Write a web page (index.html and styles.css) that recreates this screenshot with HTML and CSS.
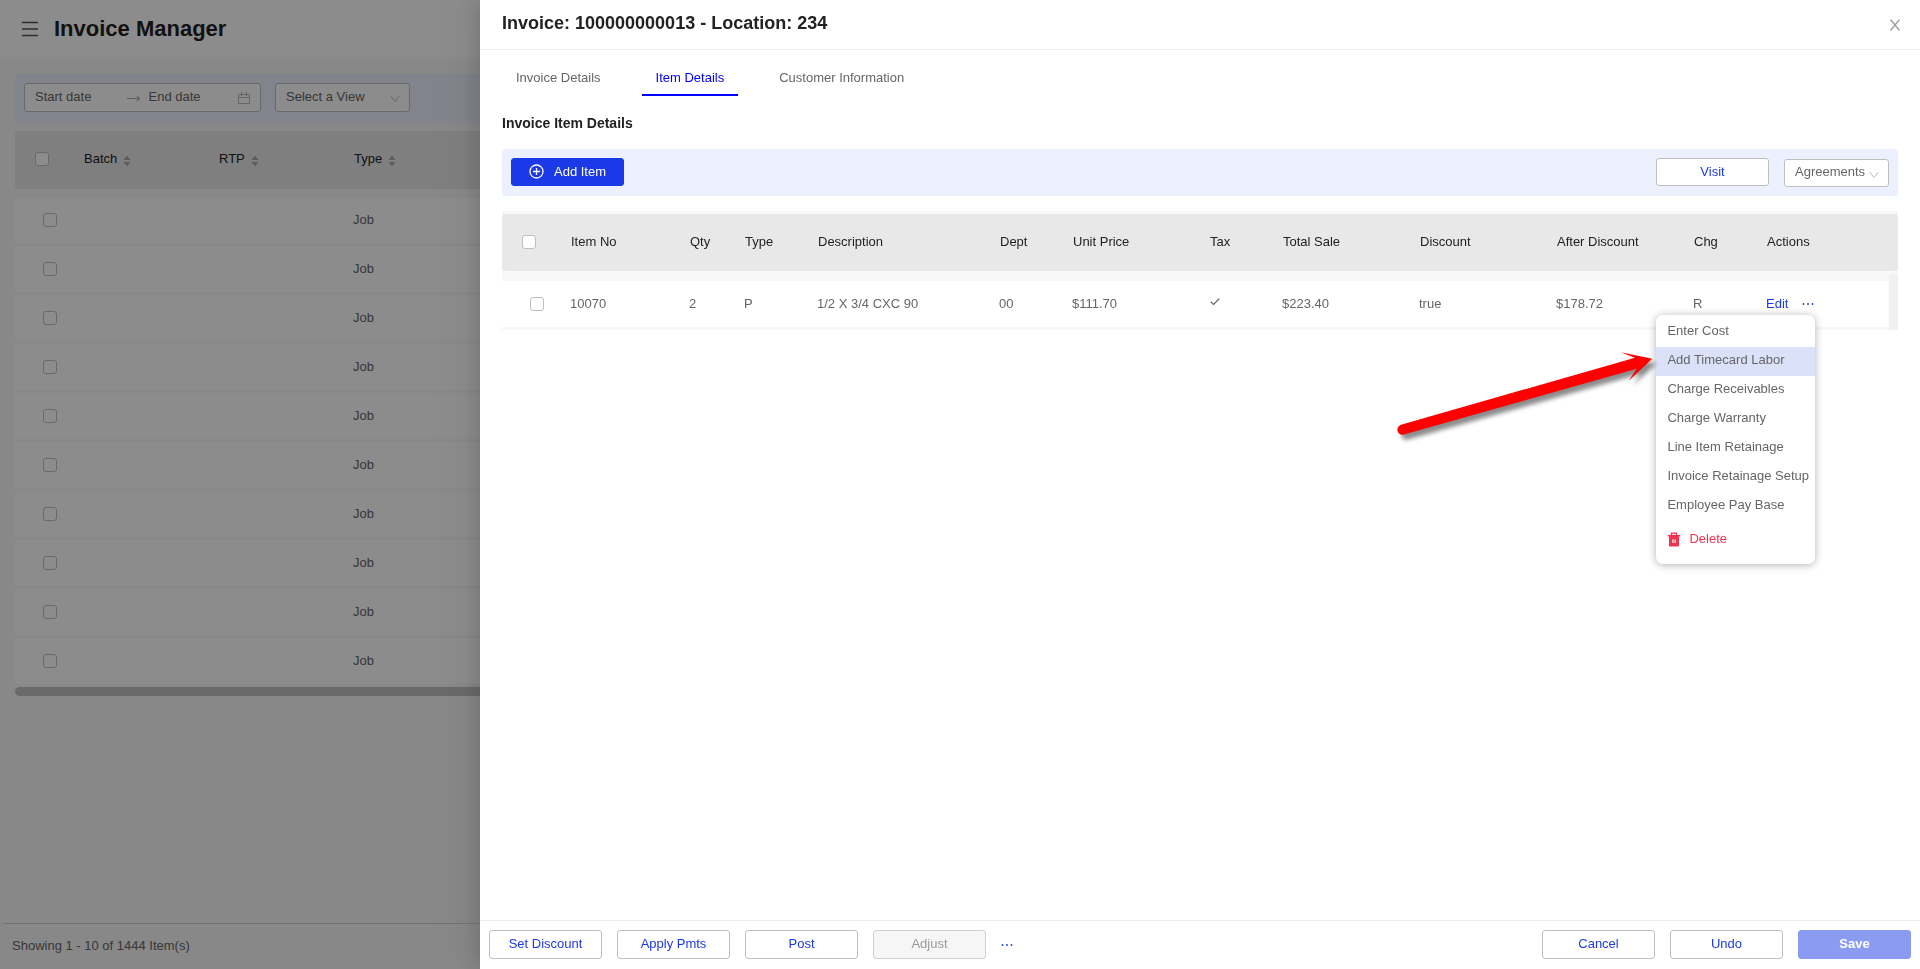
FILE: index.html
```html
<!DOCTYPE html>
<html lang="en">
<head>
<meta charset="utf-8">
<title>Invoice Manager</title>
<meta name="viewport" content="width=device-width, initial-scale=1">
<link rel="stylesheet" href="styles.css">
</head>
<body>
<div class="app">
  <header class="topbar">
    <button class="menu-toggle" type="button" aria-label="Menu">
      <svg width="18" height="16" viewBox="0 0 18 16" fill="none" stroke="currentColor" stroke-width="1.7"><path d="M1 1.500h16M1 8h16M1 14.500h16"/></svg>
    </button>
    <h1 class="page-title">Invoice Manager</h1>
  </header>
  <main class="content">
    <div class="filters">
      <div class="date-range">
        <input class="date-input" type="text" placeholder="Start date" aria-label="Start date">
        <svg class="range-arrow" width="14" height="8" viewBox="0 0 14 8" fill="none" stroke="currentColor"><path d="M0 4.500h13M9.500 2l3.500 2.500L9.500 7"/></svg>
        <input class="date-input" type="text" placeholder="End date" aria-label="End date">
        <svg class="calendar" width="12" height="12" viewBox="0 0 12 12" fill="none" stroke="currentColor"><path d="M.5 2.500h11v9H.5zM.5 5.500h11M3.500 0v4M8.500 0v4"/></svg>
      </div>
      <div class="select-box view-select">
        <select class="select" aria-label="View"><option>Select a View</option></select>
        <svg class="chevron" width="10" height="8" viewBox="0 0 10 8" fill="none" stroke="currentColor"><path d="M.7 1l4.300 5.500L9.300 1"/></svg>
      </div>
    </div>
    <table class="list">
      <colgroup><col class="list-check"><col class="list-col"><col class="list-col"><col></colgroup>
      <thead>
        <tr>
          <th><input class="check" type="checkbox" aria-label="Select all invoices"></th>
          <th><span class="sortable">Batch <svg class="sort" width="8" height="12" viewBox="0 0 8 12"><path d="M4 .5L7.500 5h-7zM4 11.500L.5 7h7z" fill="currentColor"/></svg></span></th>
          <th><span class="sortable">RTP <svg class="sort" width="8" height="12" viewBox="0 0 8 12"><path d="M4 .5L7.500 5h-7zM4 11.500L.5 7h7z" fill="currentColor"/></svg></span></th>
          <th><span class="sortable">Type <svg class="sort" width="8" height="12" viewBox="0 0 8 12"><path d="M4 .5L7.500 5h-7zM4 11.500L.5 7h7z" fill="currentColor"/></svg></span></th>
        </tr>
      </thead>
      <tbody>
        <tr><td><input class="check" type="checkbox" aria-label="Select row 1"></td><td></td><td></td><td>Job</td></tr>
        <tr><td><input class="check" type="checkbox" aria-label="Select row 2"></td><td></td><td></td><td>Job</td></tr>
        <tr><td><input class="check" type="checkbox" aria-label="Select row 3"></td><td></td><td></td><td>Job</td></tr>
        <tr><td><input class="check" type="checkbox" aria-label="Select row 4"></td><td></td><td></td><td>Job</td></tr>
        <tr><td><input class="check" type="checkbox" aria-label="Select row 5"></td><td></td><td></td><td>Job</td></tr>
        <tr><td><input class="check" type="checkbox" aria-label="Select row 6"></td><td></td><td></td><td>Job</td></tr>
        <tr><td><input class="check" type="checkbox" aria-label="Select row 7"></td><td></td><td></td><td>Job</td></tr>
        <tr><td><input class="check" type="checkbox" aria-label="Select row 8"></td><td></td><td></td><td>Job</td></tr>
        <tr><td><input class="check" type="checkbox" aria-label="Select row 9"></td><td></td><td></td><td>Job</td></tr>
        <tr><td><input class="check" type="checkbox" aria-label="Select row 10"></td><td></td><td></td><td>Job</td></tr>
      </tbody>
    </table>
    <div class="list-scroll"></div>
  </main>
  <footer class="status">Showing 1 - 10 of 1444 Item(s)</footer>
</div>
<div class="mask"></div>
<section class="drawer" role="dialog" aria-label="Invoice">
  <header class="drawer-head">
    <h2 class="drawer-title">Invoice: 100000000013 - Location: 234</h2>
    <button class="close" type="button" aria-label="Close">
      <svg width="10" height="12" viewBox="0 0 10 12" fill="none" stroke="currentColor" stroke-width="1.200"><path d="M.5.5l9 11M9.500.5l-9 11"/></svg>
    </button>
  </header>
  <div class="drawer-body">
    <nav class="tabs">
      <button class="tab" type="button">Invoice Details</button>
      <button class="tab tab-active" type="button">Item Details</button>
      <button class="tab" type="button">Customer Information</button>
    </nav>
    <h3 class="section-title">Invoice Item Details</h3>
    <div class="toolbar">
      <button class="btn btn-primary" type="button">
        <svg width="15" height="15" viewBox="0 0 15 15" fill="none" stroke="currentColor" stroke-width="1.300"><circle cx="7.500" cy="7.500" r="6.500"/><path d="M7.500 4v7M4 7.500h7"/></svg>
        Add Item
      </button>
      <div class="toolbar-right">
        <button class="btn" type="button">Visit</button>
        <div class="select-box agreements">
          <select class="select" aria-label="Agreements"><option>Agreements</option></select>
          <svg class="chevron" width="10" height="8" viewBox="0 0 10 8" fill="none" stroke="currentColor"><path d="M.7 1l4.300 5.500L9.300 1"/></svg>
        </div>
      </div>
    </div>
    <div class="items-wrap">
      <table class="items">
        <colgroup>
          <col class="c-check"><col class="c-item"><col class="c-qty"><col class="c-small"><col><col class="c-small"><col class="c-money"><col class="c-small"><col class="c-money"><col class="c-money"><col class="c-money"><col class="c-small"><col class="c-actions"><col class="c-gutter">
        </colgroup>
        <thead>
          <tr>
            <th><input class="check" type="checkbox" aria-label="Select all items"></th>
            <th>Item No</th><th>Qty</th><th>Type</th><th>Description</th><th>Dept</th><th>Unit Price</th><th>Tax</th><th>Total Sale</th><th>Discount</th><th>After Discount</th><th>Chg</th><th>Actions</th><th class="head-end"></th>
          </tr>
        </thead>
        <tbody>
          <tr>
            <td><input class="check" type="checkbox" aria-label="Select item 10070"></td>
            <td>10070</td><td>2</td><td>P</td><td>1/2 X 3/4 CXC 90</td><td>00</td><td>$111.70</td>
            <td><svg class="tick" width="10" height="8" viewBox="0 0 10 8" fill="none" stroke="currentColor" stroke-width="1.200"><path d="M.7 3.800l2.800 2.700L9.300.8"/></svg></td>
            <td>$223.40</td><td>true</td><td>$178.72</td><td>R</td>
            <td>
              <div class="actions">
                <a class="edit" href="#">Edit</a>
                <button class="more" type="button" aria-label="More actions"><svg width="12" height="4" viewBox="0 0 12 4" fill="currentColor"><circle cx="1.500" cy="2" r=".9"/><circle cx="6" cy="2" r=".9"/><circle cx="10.500" cy="2" r=".9"/></svg></button>
                <div class="menu">
                  <button class="menu-item" type="button">Enter Cost</button>
                  <button class="menu-item menu-hover" type="button">Add Timecard Labor</button>
                  <button class="menu-item" type="button">Charge Receivables</button>
                  <button class="menu-item" type="button">Charge Warranty</button>
                  <button class="menu-item" type="button">Line Item Retainage</button>
                  <button class="menu-item" type="button">Invoice Retainage Setup</button>
                  <button class="menu-item" type="button">Employee Pay Base</button>
                  <button class="menu-item menu-delete" type="button">
                    <svg width="14" height="15" viewBox="0 0 14 15" fill="none" stroke="currentColor"><path d="M4.500 3V1.200h5V3" stroke-width="1.300"/><path d="M.8 3.700h12.400" stroke-width="1.600"/><path d="M2.500 4.500h9v9.500h-9z" fill="currentColor"/><path d="M5.900 7.500v3.600M8.100 7.500v3.600" stroke="#fff" stroke-width="1.200"/></svg>
                    Delete
                  </button>
                  <svg class="pointer" width="272" height="102" viewBox="0 0 272 102"><path d="M9 79.800L243 12.700l-14.300-5.400 31.600 6.400-23.600 22 8-12L12 89.600A5.100 5.100 0 0 1 9 79.800z" fill="#f00"/></svg>
                </div>
              </div>
            </td>
            <td class="gutter"></td>
          </tr>
        </tbody>
      </table>
    </div>
  </div>
  <footer class="drawer-foot">
    <button class="btn" type="button">Set Discount</button>
    <button class="btn" type="button">Apply Pmts</button>
    <button class="btn" type="button">Post</button>
    <button class="btn" type="button" disabled>Adjust</button>
    <button class="more" type="button" aria-label="More"><svg width="12" height="4" viewBox="0 0 12 4" fill="currentColor"><circle cx="1.500" cy="2" r=".9"/><circle cx="6" cy="2" r=".9"/><circle cx="10.500" cy="2" r=".9"/></svg></button>
    <div class="foot-right">
      <button class="btn" type="button">Cancel</button>
      <button class="btn" type="button">Undo</button>
      <button class="btn btn-save" type="button">Save</button>
    </div>
  </footer>
</section>
</body>
</html>
```
FILE: styles.css
```css
* { box-sizing: border-box; }
html, body { height: 100%; }
body {
  margin: 0;
  overflow: hidden;
  font: 13px/20px "Liberation Sans", Arial, sans-serif;
  color: #666;
  background: #f7f7f7;
}
button, input, select { font: inherit; color: inherit; }
button { margin: 0; padding: 0; border: 0; background: none; cursor: pointer; }
svg { display: block; flex: none; }
h1, h2, h3 { margin: 0; color: #222; font-weight: 700; }
table { border-collapse: separate; border-spacing: 0; table-layout: fixed; width: 100%; }
th { padding: 0 8px 2px; font-weight: 400; text-align: left; color: #222; white-space: nowrap; }
td { padding: 0 7px 1px; white-space: nowrap; }

.app { display: flex; flex-direction: column; height: 100%; }
.topbar { display: flex; align-items: center; gap: 15px; height: 59px; padding: 0 21px 2px; background: #fff; flex: none; }
.menu-toggle { color: #555; }
.page-title { font-size: 22px; line-height: 28px; }
.content { flex: 1; padding: 15px 15px 0; overflow: hidden; }
.filters { display: flex; gap: 14px; height: 49px; padding: 9px; margin-bottom: 8px; background: #ecf0ff; border-radius: 3px; }
.date-range, .select-box { display: flex; align-items: center; height: 29px; background: #fff; border: 1px solid #bfbfbf; border-radius: 3px; }
.date-range { width: 237px; padding: 0 10px; }
.date-input { flex: 1; min-width: 0; padding: 0 0 2px; border: 0; outline: 0; background: none; }
.date-input::placeholder { color: #666; opacity: 1; }
.range-arrow { margin: 0 8px 0 2px; color: #aaa; }
.calendar { color: #bbb; }
.select-box { position: relative; }
.select { width: 100%; height: 100%; padding: 0 0 2px 10px; border: 0; outline: 0; background: none; appearance: none; }
.chevron { position: absolute; right: 9px; top: 11px; color: #bbb; pointer-events: none; }
.view-select { width: 135px; }

.check { display: block; width: 14px; height: 14px; margin: 0 0 0 12px; border: 1px solid #bfbfbf; border-radius: 3px; background: #fff; appearance: none; }
td .check { margin-left: 21px; }

.list-check { width: 61px; }
.list-col { width: 135px; }
.list th { height: 58px; background: #e8e8e8; }
.list th:first-child { border-radius: 3px 0 0 3px; }
.list td { height: 49px; background: #fff; border-bottom: 3px solid #f7f7f7; }
.list tbody tr:first-child td { height: 57px; border-top: 9px solid #f7f7f7; }
.sortable { display: flex; align-items: center; gap: 6px; }
.sort { margin-top: 4px; color: #aaa; }
.list-scroll { height: 9px; background: #c1c1c1; border-radius: 5px; }
.status { flex: none; height: 46px; margin-left: 3px; padding: 12px 9px; border-top: 1px solid #d0d0d0; }

.mask { position: fixed; inset: 0; background: rgba(0, 0, 0, .45); }
.drawer {
  position: fixed;
  inset: 0 0 0 25%;
  display: flex;
  flex-direction: column;
  background: #fff;
  box-shadow: -6px 0 16px rgba(0, 0, 0, .08), -9px 0 28px rgba(0, 0, 0, .05), -12px 0 48px 16px rgba(0, 0, 0, .03);
}
.drawer-head { display: flex; align-items: center; justify-content: space-between; height: 50px; padding: 0 20px 4px 22px; border-bottom: 1px solid #ececec; }
.drawer-title { font-size: 18px; line-height: 24px; }
.close { padding-top: 4px; color: #999; }
.drawer-body { flex: 1; padding: 8px 22px 0; }
.tabs { display: flex; gap: 27px; height: 38px; }
.tab { padding: 3px 14px 0; border-bottom: 2px solid transparent; }
.tab-active { color: #00f; border-color: #00f; }
.section-title { margin: 17px 0 16px; font-size: 14px; line-height: 20px; }
.toolbar { display: flex; justify-content: space-between; height: 47px; padding: 9px; background: #ecf0ff; border-radius: 3px; }
.toolbar-right { display: flex; gap: 15px; }
.btn { display: flex; align-items: center; justify-content: center; gap: 10px; width: 113px; height: 29px; padding-bottom: 1px; background: #fff; border: 1px solid #bfbfbf; border-radius: 3px; color: #1c39e8; }
.toolbar .btn { height: 28px; }
.btn-primary { background: #1c39e8; border-color: #1c39e8; color: #fff; }
.agreements { width: 105px; height: 28px; align-self: flex-end; }

.items-wrap { margin-top: 15px; border-top: 3px solid #f8f8f8; }
.items th { height: 57px; background: #e8e8e8; }
.items th:first-child { border-radius: 3px 0 0 3px; }
.items .head-end { padding: 0; border-radius: 0 3px 3px 0; }
.items td { height: 59px; border-top: 10px solid #f8f8f8; border-bottom: 3px solid #f8f8f8; }
.items .gutter { padding: 0; background: #f1f1f1; border-top-width: 4px; border-bottom: 0; }
.c-check { width: 61px; }
.c-item { width: 119px; }
.c-qty { width: 55px; }
.c-small { width: 73px; }
.c-money { width: 137px; }
.c-actions { width: 130px; }
.c-gutter { width: 9px; }
.tick { margin: 0 0 3px 1px; }

.actions { position: relative; display: inline-flex; align-items: center; gap: 14px; }
.edit { color: #1c39e8; text-decoration: none; }
.more { color: #1c39e8; }
.menu { position: absolute; z-index: 1; top: calc(100% + 1px); right: -1px; width: 159px; padding: 3px 0 9px; background: #fff; border-radius: 7px; box-shadow: 0 1px 8px rgba(0, 0, 0, .3); }
.menu-item { display: flex; align-items: center; gap: 8px; width: 100%; height: 29px; padding: 0 11px 2px; white-space: nowrap; }
.menu-hover { background: #dce1fa; }
.menu-delete { margin-top: 5px; color: #ee3350; }
.pointer { position: absolute; right: calc(100% - 8px); top: 30px; filter: drop-shadow(4px 5px 2px rgba(0, 0, 0, .45)); pointer-events: none; }

.drawer-foot { display: flex; align-items: center; gap: 15px; height: 49px; padding: 0 9px 1px; border-top: 1px solid #ececec; }
.foot-right { display: flex; gap: 15px; margin-left: auto; }
.btn:disabled { background: #f6f6f6; border-color: #d0d0d0; color: #999; }
.btn-save { background: #8c9bf2; border-color: #8c9bf2; color: #fff; font-weight: 700; }
```
